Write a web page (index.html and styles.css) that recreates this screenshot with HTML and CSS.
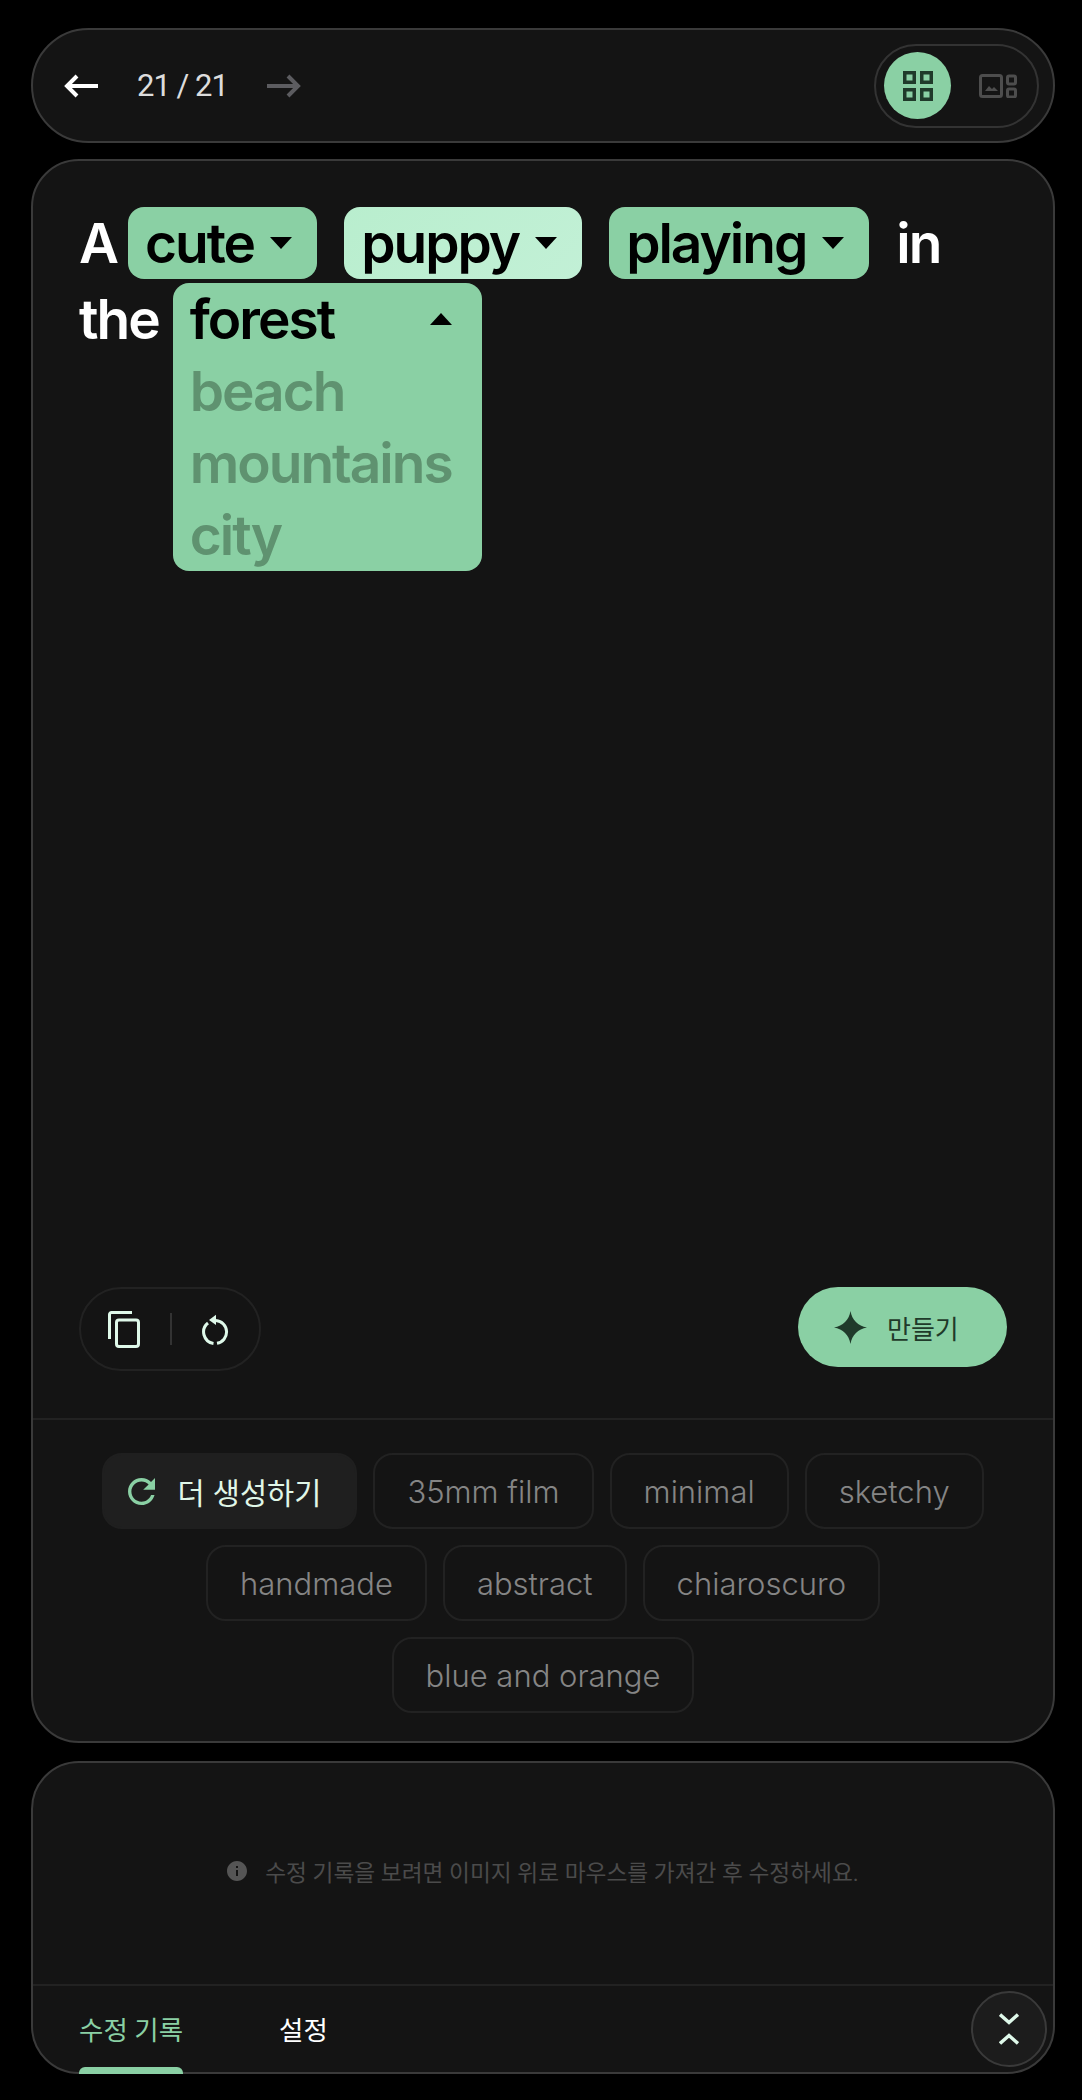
FILE: index.html
```html
<!DOCTYPE html>
<html lang="ko">
<head>
<meta charset="UTF-8">
<title>Prompt editor</title>
<link rel="stylesheet" href="styles.css">
</head>
<body>
    <header class="topbar">
        <button class="icon-btn" type="button">
            <svg width="34" height="24" viewBox="0 0 34 24"><path d="M34 12H4M13 2L3 12l10 10" fill="none" stroke="#fff" stroke-width="4"/></svg>
        </button>
        <span class="counter">21 / 21</span>
        <button class="icon-btn" type="button">
            <svg width="34" height="24" viewBox="0 0 34 24"><path d="M0 12h30M21 2l10 10-10 10" fill="none" stroke="#5c5c60" stroke-width="4"/></svg>
        </button>
        <div class="view-toggle">
            <span class="view-option active">
                <svg width="30" height="30" viewBox="0 0 30 30" fill="none" stroke="#1f3a2a" stroke-width="3.5"><rect x="1.75" y="1.75" width="9.5" height="9.5"/><rect x="18.75" y="1.75" width="9.5" height="9.5"/><rect x="1.75" y="18.75" width="9.5" height="9.5"/><rect x="18.75" y="18.75" width="9.5" height="9.5"/></svg>
            </span>
            <span class="view-option">
                <svg width="38" height="24" viewBox="0 0 38 24"><rect x="1.5" y="1.5" width="21" height="21" rx="2" fill="none" stroke="#4d4d4d" stroke-width="3"/><path d="M6 17l4-5 3 3 2-2 4 4z" fill="#4d4d4d"/><rect x="28.5" y="2" width="8" height="8" rx="1.5" fill="none" stroke="#4d4d4d" stroke-width="3"/><rect x="28.5" y="15" width="8" height="8" rx="1.5" fill="none" stroke="#4d4d4d" stroke-width="3"/></svg>
            </span>
        </div>
    </header>

    <main class="card editor">
        <section class="editor-body">
            <div class="prompt">
                <span class="word">A</span>
                <span class="slot">cute<i class="caret"></i></span>
                <span class="slot light">puppy<i class="caret"></i></span>
                <span class="slot">playing<i class="caret"></i></span>
                <span class="word">in</span>
                <span class="word">the</span>
                <div class="slot-menu">
                    <div class="slot-current">forest<i class="caret up"></i></div>
                    <div class="slot-item">beach</div>
                    <div class="slot-item">mountains</div>
                    <div class="slot-item">city</div>
                </div>
            </div>
            <div class="actions">
                <div class="tool-group">
                    <svg width="32" height="37" viewBox="0 0 32 37" fill="none" stroke="#dff9ea" stroke-width="3"><rect x="8.5" y="9" width="22" height="26.5" rx="2.5"/><path d="M1.5 28V3.5a2 2 0 0 1 2-2H24"/></svg>
                    <span class="tool-sep"></span>
                    <svg width="28" height="32" viewBox="0 0 28 32"><path d="M7 10A11.5 11.5 0 0 0 12.5 30.4M16 30.3A11.5 11.5 0 0 0 15 7.5" fill="none" stroke="#dff9ea" stroke-width="3"/><path d="M15 1.7L8 7l7 5z" fill="#dff9ea"/></svg>
                </div>
                <button class="create-btn" type="button">
                    <svg width="33" height="33" viewBox="0 0 33 33"><path d="M16.5 0C18 9 24 15 33 16.5 24 18 18 24 16.5 33 15 24 9 18 0 16.5 9 15 15 9 16.5 0z" fill="#1f3a2a"/></svg>
                    만들기
                </button>
            </div>
        </section>
        <section class="suggestions">
            <button class="chip more" type="button">
                <svg width="27" height="27" viewBox="4 4 16 16"><path d="M17.65 6.35C16.2 4.9 14.21 4 12 4c-4.42 0-7.99 3.58-7.99 8s3.57 8 7.99 8c3.73 0 6.84-2.55 7.73-6h-2.08c-.82 2.33-3.04 4-5.65 4-3.31 0-6-2.69-6-6s2.69-6 6-6c1.66 0 3.14.69 4.22 1.78L13 11h7V4l-2.35 2.35z" fill="#8ad0a4"/></svg>
                더 생성하기
            </button>
            <button class="chip" type="button">35mm film</button>
            <button class="chip" type="button">minimal</button>
            <button class="chip" type="button">sketchy</button>
            <button class="chip" type="button">handmade</button>
            <button class="chip" type="button">abstract</button>
            <button class="chip" type="button">chiaroscuro</button>
            <button class="chip" type="button">blue and orange</button>
        </section>
    </main>

    <footer class="card history">
        <div class="history-empty">
            <svg width="20" height="20" viewBox="2 2 20 20"><path d="M12 2C6.48 2 2 6.48 2 12s4.48 10 10 10 10-4.48 10-10S17.52 2 12 2zm1 15h-2v-6h2v6zm0-8h-2V7h2v2z" fill="#555"/></svg>
            수정 기록을 보려면 이미지 위로 마우스를 가져간 후 수정하세요.
        </div>
        <nav class="tabs">
            <a class="tab active">수정 기록</a>
            <a class="tab">설정</a>
            <button class="collapse-btn" type="button">
                <svg width="20" height="32" viewBox="0 0 20 32" fill="none" stroke="#dff9ea" stroke-width="3.5"><path d="M1 1.5l9 8 9-8M1 30.5l9-8 9 8"/></svg>
            </button>
        </nav>
    </footer>
</body>
</html>
```

FILE: styles.css
```css
* {
    box-sizing: border-box;
}

body {
    margin: 0;
    height: 2100px;
    padding: 28px 27px 26px 31px;
    background: #000;
    color: #fff;
    font-family: Roboto, "Noto Sans CJK KR", sans-serif;
    display: flex;
    flex-direction: column;
    overflow: hidden;
}

button {
    font-family: inherit;
    border: none;
    background: none;
    padding: 0;
}

.topbar {
    height: 115px;
    flex: none;
    display: flex;
    align-items: center;
    padding: 0 14px 0 31px;
    background: #141414;
    border: 2px solid #3a3a3a;
    border-radius: 58px;
    margin-bottom: 16px;
}

.icon-btn {
    display: flex;
}

.counter {
    margin: 0 39px;
    font-size: 31px;
    font-weight: 400;
    letter-spacing: -1px;
    color: #dcdcdc;
}

.view-toggle {
    margin-left: auto;
    width: 165px;
    height: 84px;
    display: flex;
    align-items: center;
    padding: 0 8px;
    border: 2px solid #333;
    border-radius: 42px;
}

.view-option {
    display: flex;
    align-items: center;
    justify-content: center;
}

.view-option.active {
    width: 67px;
    height: 67px;
    border-radius: 50%;
    background: #8ad0a4;
    margin-right: 28px;
}

.card {
    flex: none;
    background: #141414;
    border: 2px solid #3a3a3a;
    border-radius: 48px;
}

.editor {
    height: 1584px;
    margin-bottom: 18px;
    display: flex;
    flex-direction: column;
}

.editor-body {
    flex: 1;
    display: flex;
    flex-direction: column;
    justify-content: space-between;
    padding: 46px 46px 47px;
    border-bottom: 2px solid #222;
}

.prompt {
    display: flex;
    flex-wrap: wrap;
    align-items: flex-start;
    row-gap: 4px;
    font-family: Inter, sans-serif;
    font-size: 55px;
    font-weight: 600;
    letter-spacing: -2px;
    line-height: 72px;
}

.word {
    margin-right: 11px;
}

.slot {
    height: 72px;
    display: flex;
    align-items: center;
    gap: 16px;
    margin-right: 27px;
    padding: 0 25px 0 17px;
    background: #8ad0a4;
    border-radius: 16px;
    color: #000;
}

.slot.light {
    background: linear-gradient(135deg, #b9eece, #c2f0d6);
}

.caret {
    width: 0;
    height: 0;
    border-left: 11.5px solid transparent;
    border-right: 11.5px solid transparent;
    border-top: 12px solid #000;
}

.caret.up {
    border-top: none;
    border-bottom: 12px solid #000;
}

.slot-menu {
    margin-left: 3px;
    padding: 0 30px 0 17px;
    background: #8ad0a4;
    border-radius: 16px;
    color: #000;
}

.slot-current {
    height: 72px;
    display: flex;
    align-items: center;
    justify-content: space-between;
}

.slot-item {
    color: #5f9270;
}

.actions {
    display: flex;
    justify-content: space-between;
    align-items: flex-start;
}

.tool-group {
    height: 84px;
    width: 182px;
    display: flex;
    align-items: center;
    padding: 0 30px 0 27px;
    justify-content: space-between;
    border: 2px solid #222;
    border-radius: 42px;
}

.tool-sep {
    width: 2px;
    height: 32px;
    background: #333;
}

.create-btn {
    width: 209px;
    height: 80px;
    display: flex;
    align-items: center;
    gap: 20px;
    padding-left: 36px;
    background: #8ad0a4;
    border-radius: 40px;
    color: #1f3a2a;
    font-size: 26px;
}

.suggestions {
    display: flex;
    flex-wrap: wrap;
    justify-content: center;
    gap: 16px;
    padding: 33px 40px 28px;
}

.chip {
    height: 76px;
    display: flex;
    align-items: center;
    padding: 0 32px;
    border: 2px solid #222;
    border-radius: 20px;
    color: #858585;
    font-family: Inter, "Noto Sans CJK KR", sans-serif;
    font-size: 31px;
    font-weight: 300;
}

.chip.more {
    gap: 22px;
    padding: 0 34px 0 24px;
    border-color: #1f1f1f;
    background: #1f1f1f;
    color: #e0f7e8;
    font-size: 29.5px;
    font-weight: 400;
}

.history {
    height: 313px;
    display: flex;
    flex-direction: column;
}

.history-empty {
    flex: 1;
    display: flex;
    align-items: center;
    justify-content: center;
    gap: 18px;
    padding-bottom: 5px;
    color: #4b4b4b;
    font-size: 22.7px;
}

.tabs {
    height: 88px;
    flex: none;
    display: flex;
    align-items: center;
    padding: 0 6px 0 46px;
    border-top: 2px solid #222;
}

.tab {
    position: relative;
    height: 100%;
    display: flex;
    align-items: center;
    margin-right: 96px;
    padding-bottom: 2px;
    font-size: 26.5px;
    color: #fff;
}

.tab.active {
    color: #8ad0a4;
}

.tab.active::after {
    content: "";
    position: absolute;
    left: 0;
    right: 0;
    bottom: -2px;
    height: 7px;
    background: #8ad0a4;
    border-radius: 6px 6px 0 0;
}

.collapse-btn {
    width: 76px;
    height: 76px;
    margin-left: auto;
    display: flex;
    align-items: center;
    justify-content: center;
    background: #1c1c1c;
    border: 2px solid #3a3a3a;
    border-radius: 50%;
}
```
